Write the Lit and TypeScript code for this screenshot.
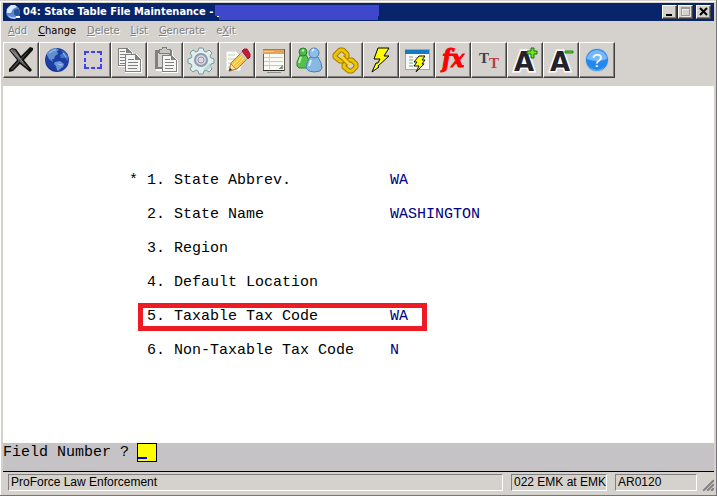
import { LitElement, html, css, svg, nothing } from "lit";
import { customElement, property } from "lit/decorators.js";

const icons: Record<string, unknown> = {
  close: svg`
    <path d="M6 8 L9 6 L13 7 L18 14 L27 5 L30 6 L30 8 L21 18 L29 28 L27 30 L17 22 L10 29 L6 30 L6 27 L14 18 Z" fill="#111"/>
    <path d="M7 8 L9 7 L12 8 L18 17 L26 27 L17 20 Z" fill="#686868"/>
    <path d="M28 7 L19 17 L9 28 L8 27 L16 18 Z" fill="#4c4c4c"/>
    <path d="M8 8 L20 20 M12 10 L17 17" stroke="#8c8c8c" fill="none"/>`,
  globe: svg`
    <circle cx="18" cy="18" r="12" fill="#1c3fa4"/>
    <path d="M7 20a11 11 0 0 0 14 9a12 12 0 0 1-14-9z" fill="#0c1d60"/>
    <path d="M8 11l4-4 5-1 3 2-2 1 1 3-3 2-1 3-2 0 1 3-4-3-2-4z" fill="#5f8fd0"/>
    <path d="M16 20l5-1 4 3-1 3-3 2-2 2-1-1-1-4-2-2z" fill="#6b97d6"/>
    <path d="M22 8l4 2 3 4 0 5-3-3-4 0-1-3 3-2z" fill="#4675bf"/>
    <path d="M10 11l5-3 2 0M19 22l4 1M24 11l3 4" stroke="#a9c6ee" fill="none"/>`,
  select: svg`<path shape-rendering="crispEdges" d="M10 13v-3h4M16 10h4M22 10h4v3M26 16v4M26 22v4h-4M20 26h-4M14 26h-4v-4M10 20v-4" fill="none" stroke="#4040f6" stroke-width="2"/>`,
  copy: svg`<g shape-rendering="crispEdges">
    <path d="M7 6h10l5 5v14H7z" fill="#fff"/>
    <path d="M7 6h9l4 4v13H7z" fill="#f4f4f2" stroke="#808080"/>
    <path d="M15 6v5h6z" fill="#808080"/>
    <path d="M9 9h5M9 12h5M9 15h5M9 18h5M9 21h5" stroke="#808080"/>
    <path d="M14 12h11l6 6v13H14z" fill="#fff"/>
    <path d="M14 12h10l5 5v12H14z" fill="#f4f4f2" stroke="#808080"/>
    <path d="M24 12v6h6z" fill="#808080"/>
    <path d="M17 17h6M17 20h10M17 23h10M17 26h9" stroke="#808080"/></g>`,
  paste: svg`<g shape-rendering="crispEdges">
    <path d="M9 9h17v20H9z" fill="#fff"/>
    <path d="M8 8h17v19H8z" fill="#808080"/>
    <path d="M11 11h11v14H11z" fill="#d5d2cd"/>
    <path d="M12 7h3l1-2h3l1 2h3v4H12z" fill="#c8c6c2" stroke="#808080"/>
    <path d="M15 13h10l6 6v12H15z" fill="#fff"/>
    <path d="M15 13h9l5 5v11H15z" fill="#f6f6f4" stroke="#808080"/>
    <path d="M24 13v5h5z" fill="#808080"/>
    <path d="M18 17h5M18 20h9M18 23h9M18 26h8" stroke="#808080"/></g>`,
  gear: svg`
    <path d="M15 9l1-3h4l1 3 2 1 3-2 3 3-2 3 1 2 3 1v4l-3 1-1 2 2 3-3 3-3-2-2 1-1 3h-4l-1-3-2-1-3 2-3-3 2-3-1-2-3-1v-4l3-1 1-2-2-3 3-3 3 2z" fill="#e2eded" stroke="#729b9f"/>
    <path d="M20 28l7-7 1 5-4 2z" fill="#b7dad6"/>
    <circle cx="18" cy="18" r="6" fill="#d5d5de" stroke="#8e9ab0" stroke-width="2"/>
    <circle cx="18" cy="18" r="3" fill="#dedcd8" stroke="#9a91b4"/>`,
  edit: svg`
    <path d="M7 9h10l5 5v15H7z" fill="#fbfbf8" stroke="#d0d3cc"/>
    <path d="M9 13h7M9 17h10M9 21h6M9 25h4" stroke="#bed2b5"/>
    <path d="M10 29l2-8 12-12 6 6-12 12z" fill="#f5c64a" stroke="#b87a1f"/>
    <path d="M14 23L26 11M16 25L28 13" stroke="#fff0a0"/>
    <path d="M10 29l2-7 5 5z" fill="#f6dfb7" stroke="#b88b50"/>
    <path d="M10 29l1-3 2 2z" fill="#222"/>
    <path d="M21 12l3-3 5 6-2 3z" fill="#c8ccd0"/>
    <path d="M23 9l2-2h3l3 5v3l-2 2z" fill="#c61d32" stroke="#a81428"/>`,
  notes: svg`<g shape-rendering="crispEdges">
    <path d="M8 7h21v21H8z" fill="#fafaf4" stroke="#665b50"/>
    <path d="M8 7h21v5H8z" fill="#e4a458"/>
    <path d="M8 7h21" stroke="#b07b3e"/>
    <path d="M9 9h10" stroke="#f8d08f"/>
    <path d="M9 15h19M9 19h19M9 23h19" stroke="#b9d1b7"/>
    <path d="M14 12v15" stroke="#ecc7be"/>
    <path d="M28 22l-5 5h5z" fill="#7b9b80"/>
    <path d="M8 28h21" stroke="#2c2c2c"/>
    <path d="M12 30h14" stroke="#8f8f8f"/></g>`,
  users: svg`
    <path d="M9 13l-3 7v4l2 2h8l3-3-1-5-3-5z" fill="#56bf4d" stroke="#268628"/>
    <circle cx="12" cy="10" r="4" fill="#51b84a" stroke="#268628"/>
    <path d="M11 9l2-1M10 15l-2 6" stroke="#bdf0ae" stroke-width="2"/>
    <path d="M19 15l-3 6-1 5 3 3 5 1 6-1 2-3-1-5-3-6z" fill="#87b9e3" stroke="#4581b8"/>
    <circle cx="23" cy="11" r="5" fill="#8dbfe8" stroke="#4581b8"/>
    <path d="M21 9l2-2M20 18l-2 6" stroke="#d9efff" stroke-width="2"/>`,
  link: svg`
    <g fill="none" stroke-linejoin="round">
      <path d="M8 13l5-5 3 0 4 4 0 3-4 4-3 0-5-4z" stroke="#a57b00" stroke-width="5"/>
      <path d="M8 13l5-5 3 0 4 4 0 3-4 4-3 0-5-4z" stroke="#edc500" stroke-width="3"/>
      <path d="M17 23l5-5 3 0 4 4 0 3-4 4-3 0-5-4z" stroke="#a57b00" stroke-width="5"/>
      <path d="M17 23l5-5 3 0 4 4 0 3-4 4-3 0-5-4z" stroke="#edc500" stroke-width="3"/>
      <path d="M15 15l7 7" stroke="#a57b00" stroke-width="5"/>
      <path d="M14 14l9 9" stroke="#f8d92a" stroke-width="3"/>
    </g>`,
  bolt: svg`<path d="M15 6h11l-5 8h5L15 24l1 1-7 5 4-9h2l2-4h-6z" fill="#ffff00" stroke="#000"/>`,
  form: svg`
    <g shape-rendering="crispEdges">
    <path d="M6 7h24v20H6z" fill="#f7f8fa" stroke="#9ea6ad"/>
    <path d="M6 8h24v4H6z" fill="#147bc2"/>
    <path d="M10 15h4M10 18h4M10 21h4M10 24h4" stroke="#b8d0b4" stroke-width="2"/>
    <path d="M16 15h10M16 18h8M16 21h10" stroke="#c8d4c6"/></g>
    <path d="M20 14h6l-3 4h3l-3 4h2l-8 8 3-6h-5l3-4h-3z" fill="#ffff00" stroke="#111"/>`,
  fx: svg`<text x="18" y="25" text-anchor="middle" font-family="'DejaVu Serif Condensed', 'DejaVu Serif', serif" font-size="24" font-weight="bold" font-style="italic" fill="#f00" stroke="#f00">fx</text>`,
  type: svg`
    <text x="13" y="21" text-anchor="middle" font-family="Liberation Serif, serif" font-size="15" font-weight="bold" fill="#3e3e56">T</text>
    <text x="23" y="26" text-anchor="middle" font-family="Liberation Serif, serif" font-size="15" font-weight="bold" fill="#b53e4a">T</text>`,
  larger: svg`
    <text x="17" y="29" text-anchor="middle" font-family="'DejaVu Sans', sans-serif" font-size="26" font-weight="bold" fill="#22222c" stroke="#fff" stroke-width="3" paint-order="stroke">A</text>
    <path d="M24 6h3v3h3v3h-3v4h-3v-4h-4V9h4z" fill="#74e314" stroke="#176e16"/>`,
  smaller: svg`
    <text x="17" y="29" text-anchor="middle" font-family="'DejaVu Sans', sans-serif" font-size="26" font-weight="bold" fill="#22222c" stroke="#fff" stroke-width="3" paint-order="stroke">A</text>
    <path d="M22 9h8v2h-8z" fill="#62d51c" stroke="#278324"/>`,
  help: svg`
    <circle cx="18" cy="18" r="12" fill="#bfc7cf"/>
    <circle cx="18" cy="18" r="11" fill="#2387ed"/>
    <path d="M8 17a10 9 0 0 1 20 0q-10 4-20 0z" fill="#77b8fa"/>
    <path d="M10 24q8 8 16 0l-3 3q-5 3-10 0z" fill="#67d5ff"/>
    <text x="18" y="25" text-anchor="middle" font-family="Liberation Sans, sans-serif" font-size="19" fill="#fff">?</text>`,
};

const tools: [string, string][] = [
  ["close", "Close"], ["globe", "Web"], ["select", "Select"], ["copy", "Copy"],
  ["paste", "Paste"], ["gear", "Settings"], ["edit", "Edit"], ["notes", "Notes"],
  ["users", "Users"], ["link", "Link"], ["bolt", "Run"], ["form", "Quick form"],
  ["fx", "Functions"], ["type", "Font"], ["larger", "Larger text"],
  ["smaller", "Smaller text"], ["help", "Help"],
];

@customElement("tool-bar")
export class ToolBar extends LitElement {
  static styles = css`
    :host { display: flex; padding: 1px 0 8px; }
    .tool {
      width: 36px; height: 36px; padding: 0; flex: none;
      display: grid; place-items: center;
      background: #d5d2cd; border: 1px solid;
      border-color: #fff #404040 #404040 #fff;
      box-shadow: inset -1px -1px #808080;
    }
    .icon { display: block; width: 34px; height: 34px; }
  `;
  render() {
    return tools.map(([id, label]) => html`
      <button class="tool" aria-label=${label}>
        <svg class="icon" viewBox="1 1 34 34" aria-hidden="true">${icons[id]}</svg>
      </button>`);
  }
}

interface Field { label: string; value: string; required?: boolean; marked?: boolean }

@customElement("field-list")
export class FieldList extends LitElement {
  @property({ attribute: false }) fields: Field[] = [];
  static styles = css`
    :host { display: block; padding: 78px 0 0 126px; }
    .list { margin: 0; }
    .row {
      position: relative; display: grid; align-items: center; height: 34px;
      grid-template-columns: 18px 27px 216px 1fr;
    }
    .value { margin: 0; color: #000080; }
    .label { font-weight: normal; }
    .mark {
      position: absolute; left: 9px; top: 3px; width: 289px; height: 28px;
      box-sizing: border-box; border: 5px solid #ed1c24;
    }
  `;
  render() {
    return html`<dl class="list">${this.fields.map((f, i) => html`
      <div class="row">
        <span>${f.required ? "*" : ""}</span>
        <span>${i + 1}.</span>
        <dt class="label">${f.label}</dt>
        <dd class="value">${f.value}</dd>
        ${f.marked ? html`<span class="mark"></span>` : nothing}
      </div>`)}</dl>`;
  }
}

@customElement("app-root")
export class AppRoot extends LitElement {
  fields: Field[] = [
    { label: "State Abbrev.", value: "WA", required: true },
    { label: "State Name", value: "WASHINGTON" },
    { label: "Region", value: "" },
    { label: "Default Location", value: "" },
    { label: "Taxable Tax Code", value: "WA", marked: true },
    { label: "Non-Taxable Tax Code", value: "N" },
  ];

  static styles = css`
    :host {
      display: flex; flex-direction: column; min-height: 100vh; box-sizing: border-box;
      padding: 3px; background: #d5d2cd; color: #000;
      box-shadow: inset -1px -1px #77747a, inset 0 1px #d5d2cd, inset 1px 2px #fff;
      font: 11px/14px "DejaVu Sans Condensed", Roboto, sans-serif;
    }
    .title {
      display: flex; align-items: center; height: 18px; padding: 0 3px 0 2px;
      background: #08246b; color: #fff;
    }
    .logo { width: 16px; height: 16px; margin-right: 2px; flex: none; }
    .name { margin: 0; font: inherit; font-weight: bold; white-space: nowrap; }
    .cover { width: 164px; height: 15px; margin-left: 2px; flex: none; }
    .controls { display: flex; margin-left: auto; }
    .control {
      width: 15px; height: 14px; padding: 0; background: #d5d2cd; border: 1px solid;
      border-color: #fff #404040 #404040 #fff; box-shadow: inset -1px -1px #808080;
    }
    .control + .control { margin-left: 1px; }
    .control:last-child { margin-left: 3px; }
    .glyph { display: block; width: 13px; height: 12px; }
    .menu { display: flex; gap: 11px; height: 20px; align-items: center; padding: 0 5px; }
    .item {
      padding: 0; border: 0; background: none; font: inherit; color: #808080;
      text-shadow: 1px 1px #fff;
    }
    .item.on { color: #000; text-shadow: none; }
    .key { text-decoration: underline; }
    .sheet {
      flex: 1; background: #fff;
      font: 15px/18px "Liberation Mono", "Courier New", monospace;
    }
    .prompt {
      display: flex; align-items: flex-start; gap: 8px; height: 28px;
      background: #c5c3c6; border-bottom: 1px solid #000;
      font: 15px/18px "Liberation Mono", "Courier New", monospace;
    }
    .ask { padding-top: 1px; }
    .entry {
      width: 20px; height: 19px; box-sizing: border-box; padding: 0 1px;
      border: 1px solid #000; border-radius: 0; outline: 0; font: inherit; color: #00f;
      background: linear-gradient(#00f, #00f) 0 13px / 9px 2px no-repeat, #ff0;
    }
    .status {
      display: grid; grid-template-columns: 1fr 96px 82px 9px; gap: 8px;
      padding: 2px 0 2px 5px; font: 12px/15px "Liberation Sans", Arial, sans-serif;
    }
    .panel {
      border: 1px solid; border-color: #808080 #fff #fff #808080;
      padding: 0 2px; white-space: nowrap; overflow: hidden;
    }
    .grip { width: 12px; height: 12px; align-self: end; justify-self: end; }
  `;

  render() {
    return html`
      <header class="title">
        <svg class="logo" viewBox="0 0 16 16" aria-hidden="true">
          <circle cx="8" cy="8" r="7" fill="#5d86c8"/>
          <path d="M2 5l4-4 4 0 2 2-4 2-2 4-4 0z" fill="#d9e8fa"/>
          <path d="M9 6l4-1 2 4-3 4-3-3z" fill="#2450a0"/>
          <path d="M1 9q4 6 12 3l-3 3-5-1z" fill="#a9c7ef"/>
          <path d="M11 13h4" stroke="#fff" stroke-width="2"/>
        </svg>
        <h1 class="name">04: State Table File Maintenance -</h1>
        <svg class="cover" viewBox="0 0 164 15" aria-hidden="true">
          <path d="M0 0H164V11H163V15H4V11H0z" fill="#3f48cc"/>
          <path d="M2 11h2v1H2z" fill="#fff"/>
        </svg>
        <div class="controls">
          <button class="control" aria-label="Minimize"><svg class="glyph" viewBox="0 0 13 12"><path d="M3 8h6v2H3z"/></svg></button>
          <button class="control" aria-label="Maximize"><svg class="glyph" viewBox="0 0 13 12"><path d="M3 3h8v7H3z" fill="none" stroke="#fff"/><path d="M2 1h9v2H2zM2 3h1v6H2zM10 3h1v6h-1zM2 9h9v1H2z" fill="#9b9896"/></svg></button>
          <button class="control" aria-label="Close window"><svg class="glyph" viewBox="0 0 13 12"><path d="M3 2l7 7M10 2l-7 7" stroke="#000" stroke-width="2"/></svg></button>
        </div>
      </header>
      <nav class="menu">
        <button class="item"><span class="key">A</span>dd</button>
        <button class="item on"><span class="key">C</span>hange</button>
        <button class="item"><span class="key">D</span>elete</button>
        <button class="item"><span class="key">L</span>ist</button>
        <button class="item"><span class="key">G</span>enerate</button>
        <button class="item">e<span class="key">X</span>it</button>
      </nav>
      <tool-bar></tool-bar>
      <main class="sheet"><field-list .fields=${this.fields}></field-list></main>
      <div class="prompt">
        <label class="ask" for="entry">Field Number ?</label>
        <input class="entry" id="entry" type="text">
      </div>
      <footer class="status">
        <span class="panel">ProForce Law Enforcement</span>
        <span class="panel">022 EMK at EMK</span>
        <span class="panel">AR0120</span>
        <svg class="grip" viewBox="0 0 12 12" aria-hidden="true">
          <path d="M0 12L12 0M4 12L12 4M8 12L12 8" stroke="#fff"/>
          <path d="M1 12L12 1M5 12L12 5M9 12L12 9" stroke="#808080" stroke-width="2"/>
        </svg>
      </footer>`;
  }
}
